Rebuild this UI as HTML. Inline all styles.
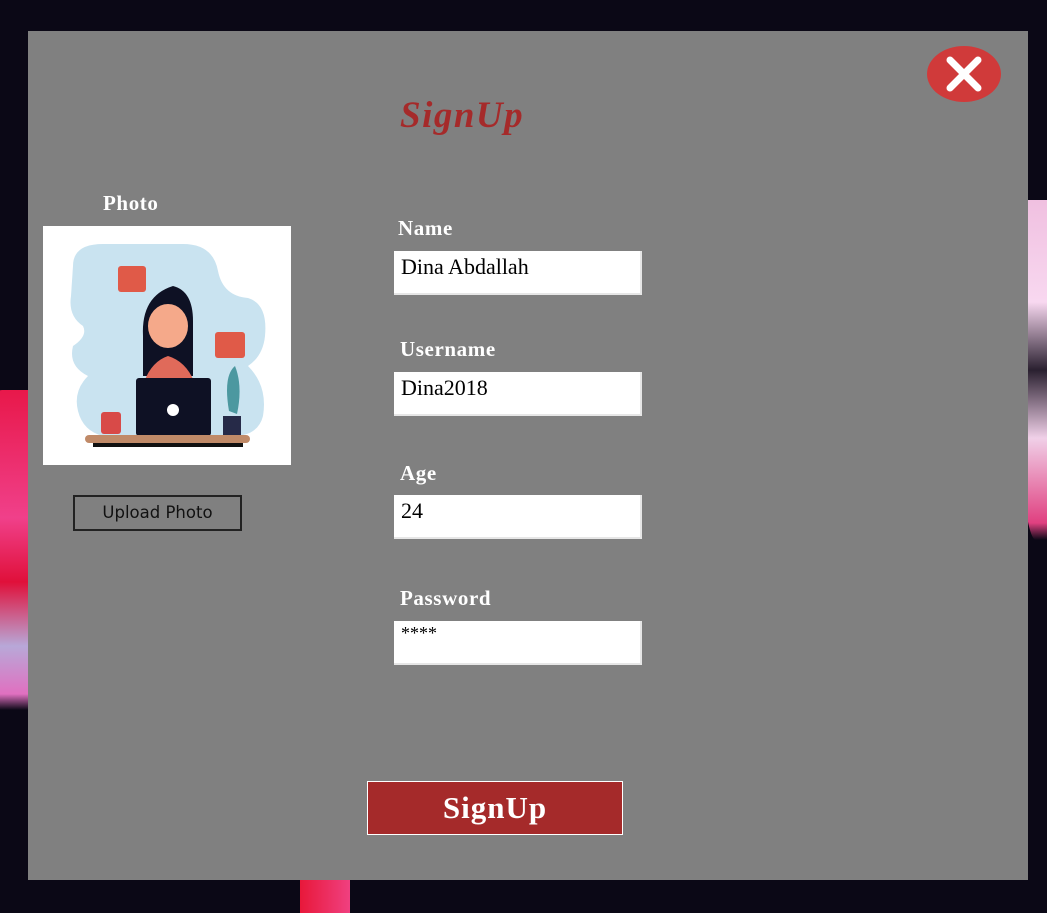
<!DOCTYPE html>
<html><head><meta charset="utf-8"><style>
*{margin:0;padding:0;box-sizing:border-box}
body{width:1047px;height:913px;overflow:hidden;background:#0b0816;position:relative;font-family:"Liberation Serif",serif}
.bg{position:absolute}
#panel{position:absolute;left:28px;top:31px;width:1000px;height:849px;background:#808080}
.lbl{position:absolute;color:#fff;font-weight:bold;font-size:21px;letter-spacing:0.6px}
.inp{position:absolute;left:366px;width:248px;height:44px;background:#fff;border-right:2px solid #e6e6e6;border-bottom:2px solid #e6e6e6;font-size:22px;color:#000;padding:3px 0 0 7px}
</style></head><body>
<div class="bg" style="left:-40px;top:390px;width:70px;height:320px;border-radius:60% 0 0 40%;background:linear-gradient(180deg,#e8184a 0%,#f0408a 40%,#e0103a 60%,#b8a8d8 80%,#e070c0 95%,#0b0816 100%)"></div>
<div class="bg" style="left:1020px;top:200px;width:40px;height:340px;border-radius:0 0 0 40%;background:linear-gradient(180deg,#f0c0e0,#f8d8f0 30%,#2a2030 50%,#f0d0e8 70%,#e04080 95%,#0b0816)"></div>
<div class="bg" style="left:300px;top:878px;width:50px;height:35px;background:linear-gradient(90deg,#e8183a,#f04080)"></div>
<div id="panel">
<svg style="position:absolute;left:899px;top:15px" width="74" height="56"><ellipse cx="37" cy="28" rx="37" ry="28" fill="#d03a3a"/><path d="M23 14 L51 42 M51 14 L23 42" stroke="#fff" stroke-width="7" stroke-linecap="round"/></svg>
<div style="position:absolute;left:372px;top:63px;color:#a52a2a;font-size:37px;font-weight:bold;font-style:italic;letter-spacing:1.5px">SignUp</div>
<div class="lbl" style="left:75px;top:160px">Photo</div>
<div style="position:absolute;left:15px;top:195px;width:248px;height:239px;background:#fff">
<svg width="248" height="239" viewBox="0 0 248 239">
<path d="M30 40 Q30 18 60 18 L140 18 Q170 18 175 45 Q180 70 205 72 Q225 78 222 110 Q220 130 205 140 Q225 160 220 190 Q215 210 190 210 L60 210 Q40 205 35 185 Q30 165 45 150 Q25 140 30 120 Q45 110 40 100 Q25 90 28 70 Z" fill="#c9e3f0"/>
<rect x="75" y="40" width="28" height="26" rx="3" fill="#e05a48"/>
<rect x="172" y="106" width="30" height="26" rx="3" fill="#e05a48"/>
<path d="M100 110 Q98 70 130 60 Q150 65 150 95 L150 150 L100 150 Z" fill="#0e1124"/>
<ellipse cx="125" cy="100" rx="20" ry="22" fill="#f5a98a"/>
<path d="M95 200 Q95 140 125 130 Q158 140 158 200 Z" fill="#e06a5a"/>
<rect x="93" y="152" width="75" height="58" rx="3" fill="#0e1124"/>
<circle cx="130" cy="184" r="6" fill="#fff"/>
<rect x="58" y="186" width="20" height="22" rx="3" fill="#d84a48"/>
<path d="M186 185 Q180 150 192 140 Q200 160 194 188 Z" fill="#4c98a0"/>
<rect x="180" y="190" width="18" height="20" fill="#262a48"/>
<rect x="42" y="209" width="165" height="8" rx="4" fill="#c08a68"/>
<rect x="50" y="217" width="150" height="4" fill="#111"/>
</svg></div>
<div style="position:absolute;left:45px;top:464px;width:169px;height:36px;border:2px solid #222;font-family:'DejaVu Sans','Liberation Sans',sans-serif;font-size:16.5px;text-align:center;line-height:32px;color:#111">Upload Photo</div>
<div class="lbl" style="left:370px;top:185px">Name</div>
<div class="inp" style="top:220px">Dina Abdallah</div>
<div class="lbl" style="left:372px;top:306px">Username</div>
<div class="inp" style="top:341px">Dina2018</div>
<div class="lbl" style="left:372px;top:430px">Age</div>
<div class="inp" style="top:464px">24</div>
<div class="lbl" style="left:372px;top:555px">Password</div>
<div class="inp" style="top:590px;font-size:18px;padding-top:2px">****</div>
<div style="position:absolute;left:339px;top:750px;width:256px;height:54px;background:#a52a2a;border:1px solid #fff;color:#fff;font-weight:bold;font-size:31px;letter-spacing:1px;text-align:center;line-height:52px">SignUp</div>
</div>
</body></html>
